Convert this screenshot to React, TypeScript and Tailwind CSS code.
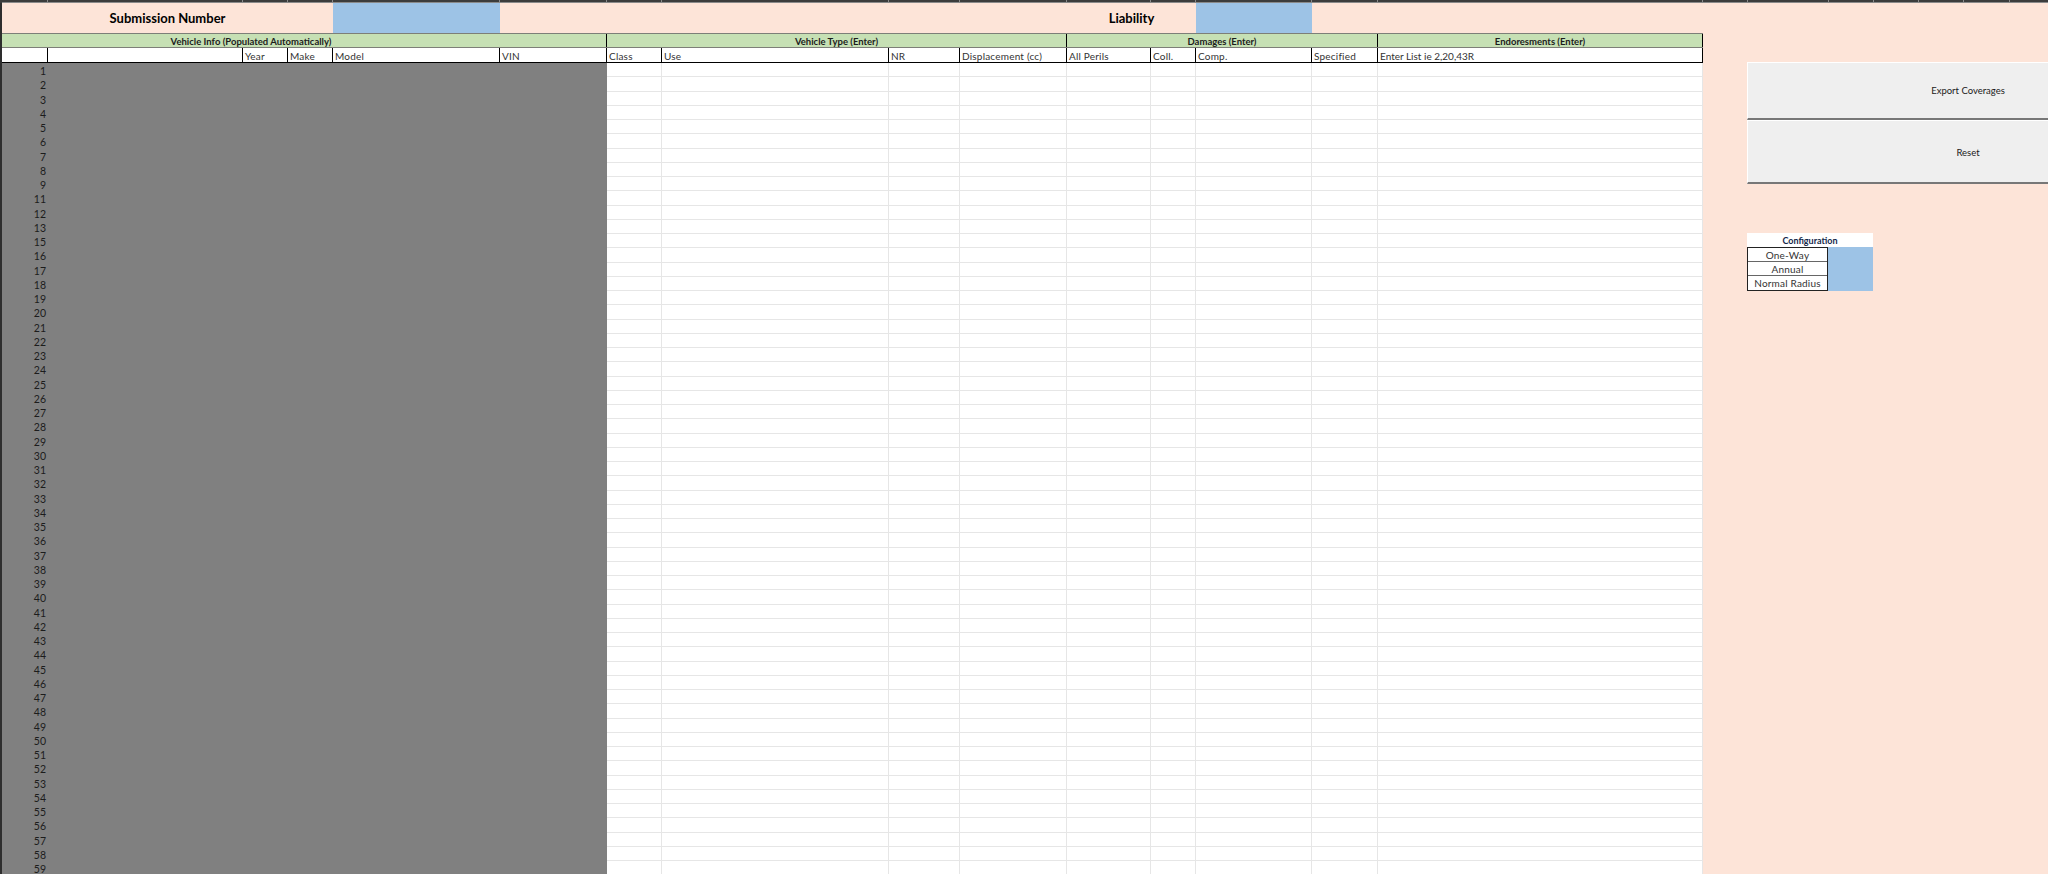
const columns = "grid grid-cols-[46px_195px_45px_45px_167px_107px_55px_227px_71px_107px_84px_45px_116px_66px_325px]";

const topTicks = [46, 195, 45, 45, 167, 107, 55, 227, 71, 107, 84, 45, 116, 66, 325, 45, 81, 45, 45, 45, 46, 39];

const rowNumbers = [
  1, 2, 3, 4, 5, 6, 7, 8, 9, 11, 12, 13,
  ...Array.from({ length: 45 }, (_, i) => i + 15),
];

const headers = [
  "", "", "Year", "Make", "Model", "VIN", "Class", "Use", "NR", "Displacement (cc)",
  "All Perils", "Coll.", "Comp.", "Specified", "Enter List ie 2,20,43R",
];

const config = ["One-Way", "Annual", "Normal Radius"];

function DataRow({ num }: { num: number }) {
  return (
    <div className={`${columns} h-[14.25px]`}>
      {/* Vehicle info is locked, so it stays grey */}
      <div className="col-span-6 grid h-[14.25px] grid-cols-[46px_1fr] bg-[#808080]">
        <div className="h-[14.25px] pr-[2px] text-right text-[10.5px] leading-[16px] text-[#1c1c1c]">{num}</div>
      </div>
      {Array.from({ length: 9 }, (_, i) => (
        <div key={i} className="border-r border-b border-[#e6e6e6] bg-white" />
      ))}
    </div>
  );
}

export default function App() {
  return (
    <div className="flex h-[874px] w-[2048px] flex-col overflow-hidden bg-[#fde4d8] font-['Lato',sans-serif] text-[#1a1a1a]">
      {/* column letters strip squeezed at the top */}
      <div className="flex h-[3px] shrink-0 bg-[#3c3c3c] pl-[2px]">
        {topTicks.map((w, i) => (
          <div key={i} style={{ width: w }} className="h-full shrink-0 border-r border-b border-[#8a8a8a]" />
        ))}
      </div>

      <div className="flex min-h-0 flex-1">
        <div className="flex w-[1703px] shrink-0 flex-col border-l-2 border-[#2e2e2e]">
          <div className={`${columns} h-[30px] shrink-0 text-[13px] font-bold text-black`}>
            <div className="col-span-4 flex items-center justify-center pt-[2px]">Submission Number</div>
            <div className="bg-[#9dc3e6]" />
            <div className="col-span-5" />
            <div className="col-span-2 flex items-center justify-center pt-[2px]">Liability</div>
            <div className="bg-[#9dc3e6]" />
            <div className="col-span-2" />
          </div>

          <div className={`${columns} h-[15px] shrink-0 border-t border-b border-[#7d7f78] bg-[#c6e0b4] text-[9.5px] font-bold leading-[14px] text-[#1c1c1c]`}>
            <div className="col-span-5 h-[13px] pt-[1px] text-center">Vehicle Info (Populated Automatically)</div>
            <div className="border-r border-black" />
            <div className="col-span-4 h-[13px] border-r border-black pt-[1px] text-center">Vehicle Type (Enter)</div>
            <div className="col-span-4 h-[13px] border-r border-black pt-[1px] text-center">Damages (Enter)</div>
            <div className="h-[13px] border-r border-black pt-[1px] text-center">Endoresments (Enter)</div>
          </div>

          <div className={`${columns} h-[15px] shrink-0 border-b border-black bg-white text-[10px] leading-[16px] tracking-[0.2px] text-[#333333]`}>
            {headers.map((h, i) => (
              <div key={i} className={`h-[14px] border-r border-black pl-[2px] whitespace-nowrap ${i === 14 ? "tracking-normal" : ""}`}>
                {h}
              </div>
            ))}
          </div>

          <div className="min-h-0 flex-1">
            {rowNumbers.map((n) => (
              <DataRow key={n} num={n} />
            ))}
          </div>
        </div>

        <div className="flex flex-1 flex-col pl-[44px] pt-[59px] text-[9.5px] text-[#1a1a1a]">
          <div className="flex h-[58px] items-center justify-center border-t border-l border-b-2 border-t-white border-l-white border-b-[#777777] bg-[#efefef] pt-[2px] pl-[140px]">
            Export Coverages
          </div>
          <div className="flex h-[64px] items-center justify-center border-t border-l border-b-2 border-t-white border-l-white border-b-[#777777] bg-[#efefef] pt-[3px] pl-[140px]">
            Reset
          </div>

          <div className="mt-[49px] w-[126px]">
            <div className="h-[14px] bg-white pt-[1px] text-center text-[9px] font-bold leading-[14px] text-[#14284b]">
              Configuration
            </div>
            <div className="flex">
              <div className="w-[81px] border border-[#222222] bg-white text-center text-[10px] tracking-[0.2px] text-[#333333]">
                {config.map((c, i) => (
                  <div key={c} className={`h-[14px] leading-[14px] ${i < 2 ? "border-b border-[#666666]" : "h-[13px]"}`}>
                    {c}
                  </div>
                ))}
              </div>
              <div className="flex-1 bg-[#9dc3e6]" />
            </div>
          </div>
        </div>
      </div>
    </div>
  );
}
